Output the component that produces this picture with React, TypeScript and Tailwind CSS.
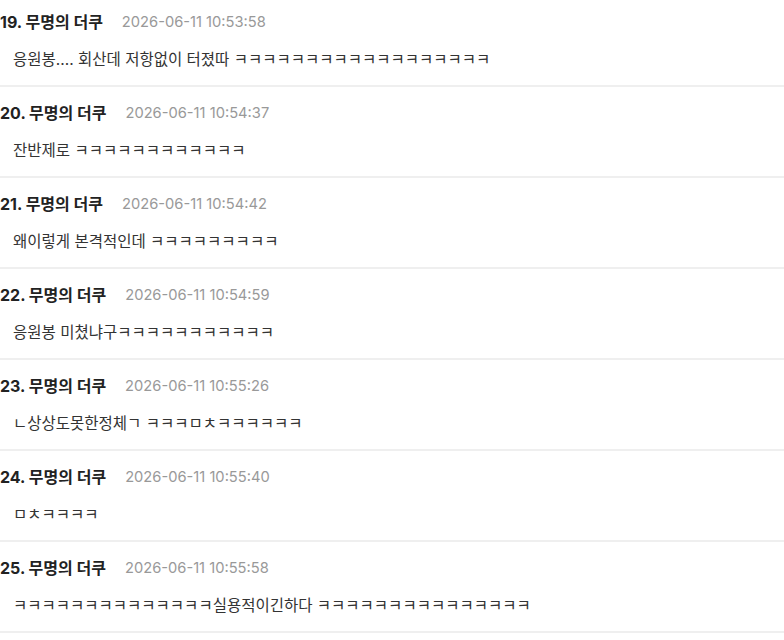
const comments = [
  { no: 19, name: "무명의 더쿠", time: "2026-06-11 10:53:58", body: "응원봉.... 회산데 저항없이 터졌따 ㅋㅋㅋㅋㅋㅋㅋㅋㅋㅋㅋㅋㅋㅋㅋㅋㅋㅋ" },
  { no: 20, name: "무명의 더쿠", time: "2026-06-11 10:54:37", body: "잔반제로 ㅋㅋㅋㅋㅋㅋㅋㅋㅋㅋㅋㅋ" },
  { no: 21, name: "무명의 더쿠", time: "2026-06-11 10:54:42", body: "왜이렇게 본격적인데 ㅋㅋㅋㅋㅋㅋㅋㅋㅋ" },
  { no: 22, name: "무명의 더쿠", time: "2026-06-11 10:54:59", body: "응원봉 미쳤냐구ㅋㅋㅋㅋㅋㅋㅋㅋㅋㅋㅋ" },
  { no: 23, name: "무명의 더쿠", time: "2026-06-11 10:55:26", body: "ㄴ상상도못한정체ㄱ ㅋㅋㅋㅁㅊㅋㅋㅋㅋㅋㅋ" },
  { no: 24, name: "무명의 더쿠", time: "2026-06-11 10:55:40", body: "ㅁㅊㅋㅋㅋㅋ" },
  { no: 25, name: "무명의 더쿠", time: "2026-06-11 10:55:58", body: "ㅋㅋㅋㅋㅋㅋㅋㅋㅋㅋㅋㅋㅋㅋ실용적이긴하다 ㅋㅋㅋㅋㅋㅋㅋㅋㅋㅋㅋㅋㅋㅋㅋ" },
];

export default function App() {
  return (
    <div className="w-[784px] h-[640px] overflow-hidden bg-white font-['Inter','Noto_Sans_CJK_KR',sans-serif]">
      <ul className="-mt-[4px]">
        {comments.map((c) => (
          <li key={c.no} className="pt-[14px] pb-[13px] border-b-2 border-[#efefef]">
            <div className="flex items-center h-6">
              <span className="text-[16px] font-bold text-[#222]">
                {c.no}. {c.name}
              </span>
              <span className="ml-[19px] text-[14.7px] text-[#999]">{c.time}</span>
            </div>
            <p className="mt-[14px] h-6 leading-6 pl-[13px] text-[15.5px] text-[#333]">
              {c.body}
            </p>
          </li>
        ))}
      </ul>
    </div>
  );
}
